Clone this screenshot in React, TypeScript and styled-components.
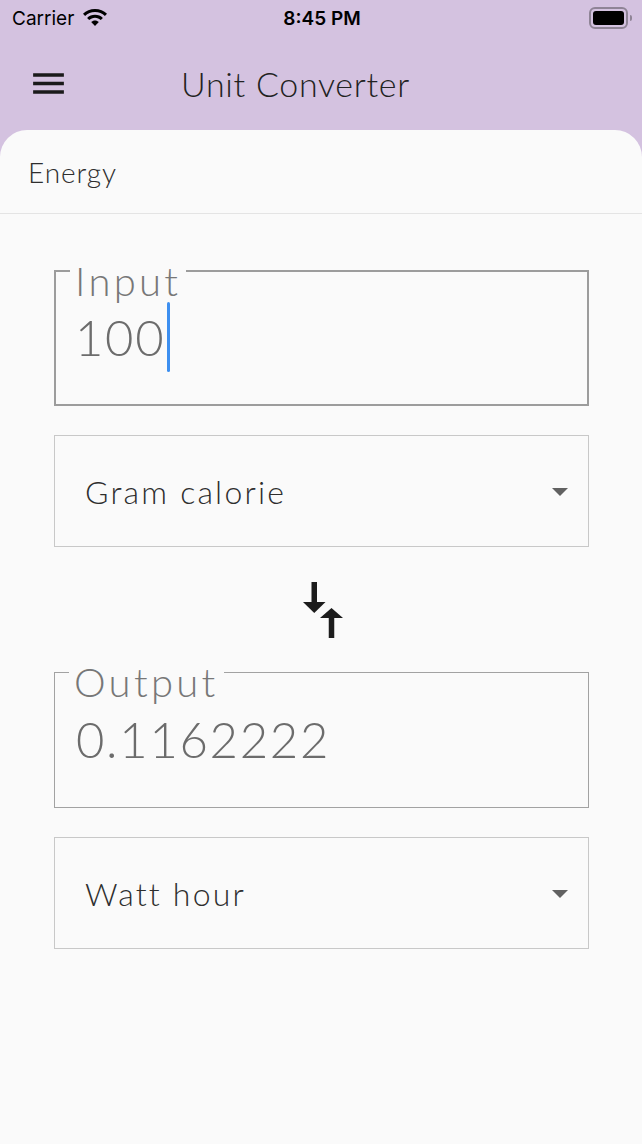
import React from "react";
import styled, { createGlobalStyle } from "styled-components";

const GlobalStyle = createGlobalStyle`
  html, body {
    margin: 0;
    padding: 0;
    background: #d4c2e0;
  }
  body {
    font-family: "Lato", "Open Sans", sans-serif;
  }
`;

const Page = styled.div`
  display: flex;
  flex-direction: column;
  width: 642px;
  height: 1144px;
  background: #d4c2e0;
`;

// iOS status bar
const StatusBar = styled.div`
  display: grid;
  grid-template-columns: 1fr auto 1fr;
  align-items: center;
  height: 36px;
  padding: 0 10px 0 12px;
  font-family: "Inter", "Liberation Sans", sans-serif;
  color: #000;
`;

const Carrier = styled.div`
  display: flex;
  align-items: center;
  gap: 9px;
  font-size: 19px;
  font-weight: 400;
`;

const Clock = styled.div`
  font-size: 19px;
  font-weight: 600;
`;

const Battery = styled.div`
  justify-self: end;
  display: flex;
  align-items: center;
  gap: 2px;
`;

const BatteryBody = styled.div`
  width: 31px;
  height: 14px;
  padding: 2px;
  border: 2px solid #8f8496;
  border-radius: 6px;
  box-sizing: content-box;
  display: flex;
`;

const BatteryLevel = styled.div`
  flex: 1;
  background: #000;
  border-radius: 3px;
`;

const BatteryNub = styled.div`
  width: 2px;
  height: 6px;
  background: #8f8496;
  border-radius: 0 2px 2px 0;
`;

const AppBar = styled.header`
  display: flex;
  align-items: center;
  height: 94px;
  padding-left: 28px;
`;

const MenuButton = styled.button`
  display: flex;
  width: 41px;
  height: 41px;
  padding: 0;
  border: 0;
  background: none;
  color: #1a1a1a;
`;

const Title = styled.h1`
  margin: 0 0 0 112px;
  font-size: 34px;
  font-weight: 300;
  color: #222;
  letter-spacing: 0.7px;
`;

const Card = styled.main`
  flex: 1;
  display: flex;
  flex-direction: column;
  background: #fafafa;
  border-radius: 27px 27px 0 0;
`;

const CategoryRow = styled.div`
  display: flex;
  align-items: center;
  height: 83px;
  padding-left: 28px;
  border-bottom: 1px solid #e4e4e4;
  font-size: 28px;
  font-weight: 300;
  letter-spacing: 0.9px;
  color: #2e2e2e;
`;

const Form = styled.div`
  display: flex;
  flex-direction: column;
  padding: 56px 53px 0 54px;
`;

const Field = styled.div<{ $focused?: boolean }>`
  position: relative;
  display: flex;
  align-items: center;
  height: 136px;
  box-sizing: border-box;
  padding: 0 0 2px ${(p) => (p.$focused ? 19 : 21)}px;
  border: ${(p) => (p.$focused ? "2.5px solid #9c9c9c" : "1.5px solid #a2a2a2")};
`;

const FieldLabel = styled.span`
  position: absolute;
  left: 14px;
  top: -11px;
  padding: 0 5px 0 5px;
  background: #fafafa;
  font-size: 40px;
  font-weight: 300;
  line-height: 40px;
  letter-spacing: 3.3px;
  color: #777;
`;

const FieldValue = styled.div`
  display: flex;
  align-items: center;
  font-size: 49px;
  font-weight: 300;
  color: #6c6c6c;
  letter-spacing: 1.7px;
`;

const Cursor = styled.span`
  display: inline-block;
  width: 3px;
  height: 70px;
  margin-left: 2px;
  border-radius: 2px;
  background: #3d8ff0;
`;

const Dropdown = styled.div`
  display: flex;
  align-items: center;
  justify-content: space-between;
  height: 112px;
  box-sizing: border-box;
  margin-top: 29px;
  padding: 0 20px 0 30px;
  border: 1.5px solid #c8c8c8;
  font-size: 32px;
  font-weight: 300;
  letter-spacing: 2.2px;
  color: #2e2e2e;
`;

const Caret = styled.span`
  width: 0;
  height: 0;
  border-left: 8.5px solid transparent;
  border-right: 8.5px solid transparent;
  border-top: 8.5px solid #616161;
  margin-top: 2px;
`;

const SwapRow = styled.div`
  display: flex;
  justify-content: center;
  align-items: center;
  height: 125px;
  padding-left: 2px;
`;

const SwapButton = styled.button`
  display: flex;
  padding: 0;
  border: 0;
  background: none;
  color: #1c1c1c;
`;

const WifiIcon = () => (
  <svg width="24" height="18" viewBox="0 0 24 18" fill="#000">
    <path d="M12 0C7.3 0 3.1 1.8 0 4.8l2.1 2.1C4.6 4.4 8.1 2.9 12 2.9s7.4 1.5 9.9 4l2.1-2.1C20.9 1.8 16.7 0 12 0z" />
    <path d="M12 5.8c-3.1 0-5.9 1.2-7.9 3.2l2.1 2.1c1.5-1.5 3.5-2.4 5.8-2.4s4.3.9 5.8 2.4l2.1-2.1c-2-2-4.8-3.2-7.9-3.2z" />
    <path d="M12 11.6c-1.5 0-2.8.6-3.8 1.5L12 17l3.8-3.9c-1-.9-2.3-1.5-3.8-1.5z" />
  </svg>
);

const MenuIcon = () => (
  <svg width="41" height="41" viewBox="0 0 24 24" fill="currentColor">
    <path d="M3 18h18v-2H3v2zm0-5h18v-2H3v2zm0-7v2h18V6H3z" />
  </svg>
);

const SwapIcon = () => (
  <svg width="40" height="58" viewBox="0 0 40 58" fill="currentColor">
    <rect x="8.5" y="1" width="5.5" height="21" />
    <polygon points="0,21 22.5,21 11.25,32" />
    <polygon points="17,37 40,37 28.5,27" />
    <rect x="25.75" y="36" width="5.5" height="21" />
  </svg>
);

export default function App() {
  return (
    <Page>
      <GlobalStyle />
      <StatusBar>
        <Carrier>
          Carrier
          <WifiIcon />
        </Carrier>
        <Clock>8:45 PM</Clock>
        <Battery>
          <BatteryBody>
            <BatteryLevel />
          </BatteryBody>
          <BatteryNub />
        </Battery>
      </StatusBar>
      <AppBar>
        <MenuButton aria-label="Menu">
          <MenuIcon />
        </MenuButton>
        <Title>Unit Converter</Title>
      </AppBar>
      <Card>
        <CategoryRow>Energy</CategoryRow>
        <Form>
          <Field $focused>
            <FieldLabel>Input</FieldLabel>
            <FieldValue>
              100
              <Cursor />
            </FieldValue>
          </Field>
          <Dropdown>
            Gram calorie
            <Caret />
          </Dropdown>
          <SwapRow>
            <SwapButton aria-label="Swap units">
              <SwapIcon />
            </SwapButton>
          </SwapRow>
          <Field>
            <FieldLabel>Output</FieldLabel>
            <FieldValue>0.1162222</FieldValue>
          </Field>
          <Dropdown>
            Watt hour
            <Caret />
          </Dropdown>
        </Form>
      </Card>
    </Page>
  );
}
